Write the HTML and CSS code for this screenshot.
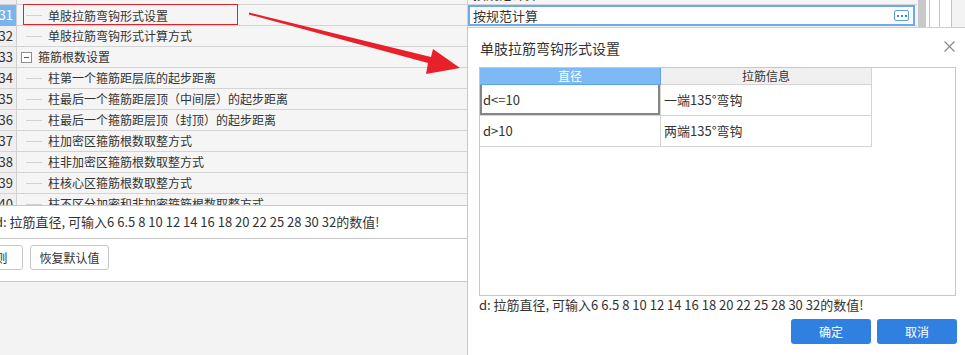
FILE: index.html
```html
<!DOCTYPE html>
<html>

<head>
  <title>单肢拉筋弯钩形式设置</title>
  <link rel="stylesheet" href="styles.css">
</head>

<body>

  <div class="top">
    <div class="grid">
      <div class="rows">
        <div class="row">
          <div class="num">30</div>
          <div class="tree"><span class="branch"></span>拉筋弯钩平直段长度设置</div>
          <div class="val">按规范计算</div>
        </div>
        <div class="row">
          <div class="num active">31</div>
          <div class="tree"><span class="branch"></span>单肢拉筋弯钩形式设置</div>
          <div class="val edit">
            <div class="editor">
              <span>按规范计算</span>
              <span class="more"><i></i><i></i><i></i></span>
            </div>
          </div>
        </div>
        <div class="row">
          <div class="num">32</div>
          <div class="tree"><span class="branch"></span>单肢拉筋弯钩形式计算方式</div>
          <div class="val"></div>
        </div>
        <div class="row">
          <div class="num">33</div>
          <div class="tree"><span class="toggle"><i></i></span>箍筋根数设置</div>
          <div class="val"></div>
        </div>
        <div class="row">
          <div class="num">34</div>
          <div class="tree"><span class="branch"></span>柱第一个箍筋距层底的起步距离</div>
          <div class="val"></div>
        </div>
        <div class="row">
          <div class="num">35</div>
          <div class="tree"><span class="branch"></span>柱最后一个箍筋距层顶（中间层）的起步距离</div>
          <div class="val"></div>
        </div>
        <div class="row">
          <div class="num">36</div>
          <div class="tree"><span class="branch"></span>柱最后一个箍筋距层顶（封顶）的起步距离</div>
          <div class="val"></div>
        </div>
        <div class="row">
          <div class="num">37</div>
          <div class="tree"><span class="branch"></span>柱加密区箍筋根数取整方式</div>
          <div class="val"></div>
        </div>
        <div class="row">
          <div class="num">38</div>
          <div class="tree"><span class="branch"></span>柱非加密区箍筋根数取整方式</div>
          <div class="val"></div>
        </div>
        <div class="row">
          <div class="num">39</div>
          <div class="tree"><span class="branch"></span>柱核心区箍筋根数取整方式</div>
          <div class="val"></div>
        </div>
        <div class="row">
          <div class="num">40</div>
          <div class="tree"><span class="branch"></span>柱不区分加密和非加密箍筋根数取整方式</div>
          <div class="val"></div>
        </div>
      </div>
    </div>
    <div class="side">
      <span class="thumb"></span>
      <span class="cols"><i class="c1"></i><i class="c2"></i><i class="c3"></i></span>
    </div>
  </div>

  <div class="tip">d: 拉筋直径, 可输入6 6.5 8 10 12 14 16 18 20 22 25 28 30 32的数值!</div>

  <div class="actions">
    <button class="btn first">保存规则</button>
    <button class="btn">恢复默认值</button>
  </div>

  <!-- 弹出的设置窗口 -->
  <div class="dialog">
    <div class="dlg-head">
      <span class="dlg-title">单肢拉筋弯钩形式设置</span>
      <svg class="close" width="11" height="11" viewBox="0 0 11 11">
        <path d="M0.5 0.5 L10.5 10.5 M10.5 0.5 L0.5 10.5" stroke="#8a8a8a" stroke-width="1.2" fill="none"/>
      </svg>
    </div>
    <div class="box">
      <div class="sheet">
        <div class="cell head sel">直径</div>
        <div class="cell head">拉筋信息</div>
        <div class="cell current">d&lt;=10</div>
        <div class="cell">一端135°弯钩</div>
        <div class="cell">d&gt;10</div>
        <div class="cell">两端135°弯钩</div>
      </div>
    </div>
    <div class="note">d: 拉筋直径, 可输入6 6.5 8 10 12 14 16 18 20 22 25 28 30 32的数值!</div>
    <div class="dlg-foot">
      <button class="primary">确定</button>
      <button class="primary">取消</button>
    </div>
  </div>

  <!-- 标注：红框和箭头 -->
  <svg class="mark" width="965" height="355" viewBox="0 0 965 355">
    <rect x="23.5" y="4.5" width="214" height="20" fill="none" stroke="#e3212b" stroke-width="1"/>
    <polygon points="249,12.5 431,57 433,49 460,68 426,74 428,63 249,14.5" fill="#e8202a"/>
  </svg>

</body>

</html>
```

FILE: styles.css
```css
body {
  margin: 0;
  width: 965px;
  height: 355px;
  overflow: hidden;
  position: relative;
  background: #f3f3f3;
  font-family: "Noto Sans CJK SC", "Noto Sans", sans-serif;
  color: #333;
}

.top {
  display: flex;
  height: 205px;
  overflow: hidden;
}

.grid {
  width: 917px;
}

.rows {
  margin-top: -16px;
}

.row {
  display: grid;
  grid-template-columns: 17px 451px 449px;
  height: 21px;
  box-sizing: border-box;
  border-bottom: 1px solid #d4d4d4;
  background: #f5f5f5;
  font-size: 12px;
  line-height: 20px;
}

.num {
  border-right: 1px solid #d0d0d0;
  background: #efefef;
  text-align: right;
  padding-right: 3px;
  font-size: 13px;
  overflow: hidden;
  white-space: nowrap;
  direction: rtl;
}

.num.active {
  background: #78b4ee;
  color: #fff;
}

.tree {
  display: flex;
  align-items: center;
  border-right: 1px solid #d0d0d0;
  overflow: hidden;
  white-space: nowrap;
}

.branch {
  width: 16px;
  margin-left: 9px;
  margin-right: 6px;
  border-top: 1px solid #d2d2d2;
}

.toggle {
  width: 9px;
  height: 9px;
  border: 1px solid #8c8c8c;
  background: #fff;
  margin-left: 4px;
  margin-right: 6px;
  display: flex;
  align-items: center;
  justify-content: center;
}

.toggle i {
  width: 5px;
  height: 1px;
  background: #555;
}

.val {
  overflow: hidden;
  white-space: nowrap;
  font-size: 13px;
  padding-left: 5px;
}

.val.edit {
  padding-left: 0;
  overflow: visible;
}

.editor {
  box-sizing: border-box;
  width: 447px;
  height: 21px;
  border: 2px solid #6eaaea;
  background: #fff;
  display: flex;
  align-items: center;
  justify-content: space-between;
  padding: 0 4px 0 3px;
  line-height: 17px;
}

.more {
  width: 13px;
  height: 9px;
  border: 1px solid #5c9ce2;
  border-radius: 2px;
  display: flex;
  gap: 2px;
  justify-content: center;
  align-items: center;
}

.more i {
  width: 2px;
  height: 2px;
  background: #3d86dc;
}

.side {
  flex: 1;
  display: flex;
  align-items: stretch;
  background: #f3f3f3;
}

.thumb {
  width: 8px;
  margin-left: 1px;
  background: #c8c8c8;
}

.cols {
  display: flex;
  background: #fff;
}

.cols i {
  border-right: 1px solid #c4c4c4;
}

.cols .c1 {
  width: 3px;
}

.cols .c2 {
  width: 9px;
}

.cols .c3 {
  width: 11px;
}

.tip {
  height: 32px;
  border-top: 1px solid #c8c8c8;
  border-bottom: 1px solid #c8c8c8;
  background: #fff;
  font-size: 13px;
  line-height: 32px;
  white-space: nowrap;
  text-indent: -5px;
}

.actions {
  height: 36px;
  padding-top: 6px;
  border-bottom: 1px solid #c8c8c8;
  background: #fff;
  display: flex;
  align-items: flex-start;
  gap: 7px;
  overflow: hidden;
}

.btn {
  flex: none;
  width: 79px;
  height: 25px;
  box-sizing: border-box;
  border: 1px solid #c6c6c6;
  border-radius: 3px;
  background: #fff;
  font-family: inherit;
  font-size: 12px;
  color: #333;
  padding: 0;
}

.btn.first {
  margin-left: -56px;
}

.dialog {
  position: absolute;
  left: 467px;
  top: 27px;
  width: 498px;
  height: 328px;
  box-sizing: border-box;
  background: #fff;
  border-left: 1px solid #c8c8c8;
  border-top: 1px solid #cfcfcf;
  padding: 0 8px 0 11px;
}

.dlg-head {
  display: flex;
  justify-content: space-between;
  align-items: center;
  height: 39px;
}

.dlg-title {
  font-size: 14px;
  line-height: 18px;
  padding-left: 1px;
}

.close {
  margin-right: 2px;
  margin-top: -2px;
}

.box {
  height: 229px;
  box-sizing: border-box;
  border: 1px solid #c8c8c8;
  margin-right: 1px;
}

.sheet {
  display: grid;
  grid-template-columns: 181px 211px;
  grid-template-rows: 17px 31px 31px;
}

.cell {
  border-right: 1px solid #d4d4d4;
  border-bottom: 1px solid #d4d4d4;
  font-size: 13px;
  line-height: 30px;
  padding-left: 3px;
  white-space: nowrap;
}

.cell.head {
  text-align: center;
  font-size: 12px;
  line-height: 16px;
  padding-left: 0;
  background: #f0f0f0;
}

.cell.head.sel {
  background: #7db9f5;
  color: #fff;
  border-bottom-color: #5ea4ec;
  border-right-color: #5ea4ec;
}

.cell.current {
  box-shadow: inset 2px 0 #858585, inset -2px 0 #858585, inset 0 -2px #858585;
}

.note {
  font-size: 13px;
  line-height: 16px;
  margin-top: 1px;
  white-space: nowrap;
}

.dlg-foot {
  display: flex;
  justify-content: flex-end;
  gap: 6px;
  margin-top: 6px;
}

.primary {
  width: 80px;
  height: 25px;
  border: none;
  border-radius: 3px;
  background: #2f80e0;
  color: #fff;
  font-family: inherit;
  font-size: 12px;
  padding: 0;
}

.mark {
  position: absolute;
  left: 0;
  top: 0;
  pointer-events: none;
}
```
